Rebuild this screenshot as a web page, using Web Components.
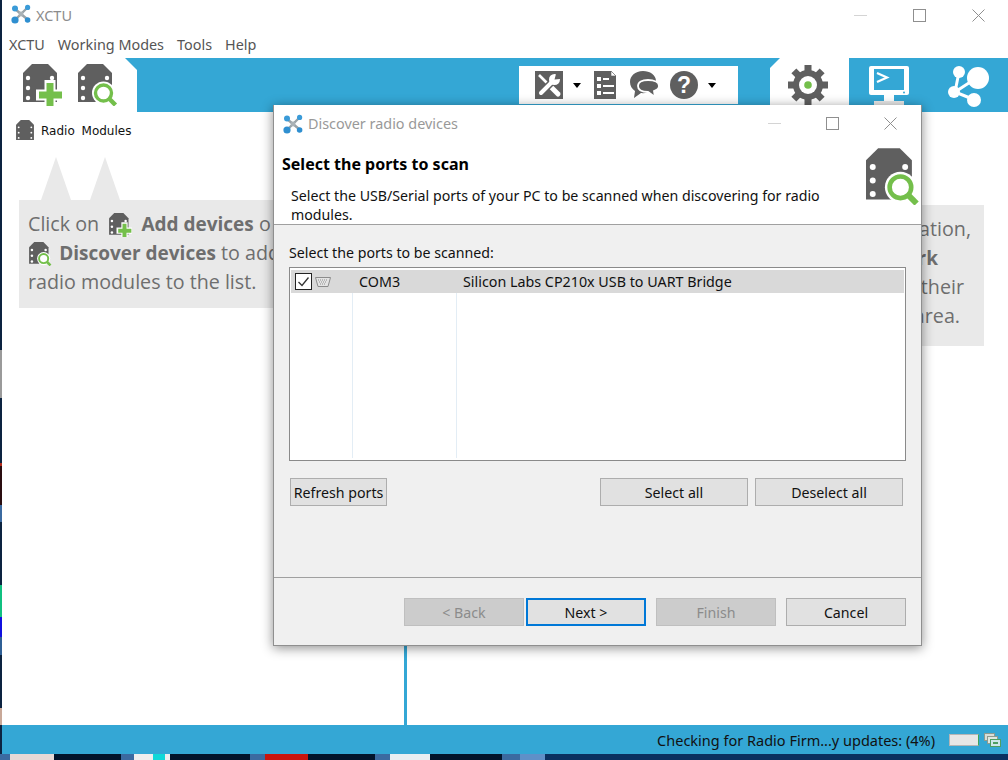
<!DOCTYPE html>
<html>
<head>
<meta charset="utf-8">
<title>XCTU</title>
<style>
  html, body { margin: 0; height: 760px; overflow: hidden; background: #0c2340; }
</style>
</head>
<body>
<xctu-app></xctu-app>

<script>
const UI_FONT = '"Noto Sans", "Open Sans", sans-serif';

class XctuLogo extends HTMLElement {
    connectedCallback() {
        const size = this.getAttribute('size') || 20;
        this.attachShadow({ mode: 'open' }).innerHTML = `
            <style>:host { display: inline-flex; flex: none; }</style>
            <svg width="${size}" height="${size}" viewBox="0 0 20 20">
                <path d="M4 5 L16 15 M16 4 L4 16" stroke="#9aa3a8" stroke-width="2.4"/>
                <circle cx="10" cy="10" r="2.4" fill="#aab2b6"/>
                <circle cx="4" cy="4.6" r="3" fill="#3a9bd8"/>
                <circle cx="16.6" cy="3.4" r="2.6" fill="#3a9bd8"/>
                <circle cx="16.6" cy="16" r="2.8" fill="#2f8fd0"/>
                <circle cx="4" cy="16" r="3.6" fill="#2f8fd0"/>
            </svg>`;
    }
}
customElements.define('xctu-logo', XctuLogo);

class ModuleIcon extends HTMLElement {
    connectedCallback() {
        const kind = this.getAttribute('kind') || 'plain';
        const w = this.getAttribute('w') || 40;
        const h = this.getAttribute('h') || 42;
        let badge = '';
        if (kind === 'add') {
            badge = `
                <path d="M27 16 V42 M13 31 H40" stroke="#fff" stroke-width="11"/>
                <path d="M27 19 V42 M16 31 H39" stroke="#74bf4b" stroke-width="7"/>`;
        } else if (kind === 'search') {
            badge = `
                <circle cx="25.500" cy="29" r="11.500" fill="#fff"/>
                <circle cx="25.500" cy="29" r="8" fill="#fff" stroke="#74bf4b" stroke-width="3.400"/>
                <path d="M31.500 35 L37.500 41" stroke="#74bf4b" stroke-width="4.400"/>`;
        }
        const box = kind === 'plain' ? '0 0 34 38' : '0 0 40 42';
        const r = kind === 'plain' ? 1.8 : 2.2;
        const holes = [[5, 14], [5, 24], [5, 34], [29, 14], [29, 24], [29, 34]]
            .map(([x, y]) => `<circle cx="${x}" cy="${y}" r="${r}"/>`).join('');
        this.attachShadow({ mode: 'open' }).innerHTML = `
            <style>:host { display: inline-flex; flex: none; vertical-align: middle; }</style>
            <svg width="${w}" height="${h}" viewBox="${box}">
                <path d="M9 0 H25 L34 9 V38 H0 V9 Z" fill="#5f5f5f"/>
                <g fill="#fff">${holes}</g>
                ${badge}
            </svg>`;
    }
}
customElements.define('module-icon', ModuleIcon);

class WinControls extends HTMLElement {
    connectedCallback() {
        this.attachShadow({ mode: 'open' }).innerHTML = `
            <style>
                :host { display: flex; align-items: center; gap: var(--ctl-gap, 46px); }
                svg { display: block; }
            </style>
            <svg width="13" height="13" viewBox="0 0 13 13"><path d="M0 6.5 H13" stroke="#d4d4d4"/></svg>
            <svg width="13" height="13" viewBox="0 0 13 13"><rect x=".5" y=".5" width="12" height="12" fill="none" stroke="#8f8f8f"/></svg>
            <svg width="13" height="13" viewBox="0 0 13 13"><path d="M.5 .5 L12.5 12.5 M12.5 .5 L.5 12.5" stroke="#8f8f8f"/></svg>`;
    }
}
customElements.define('win-controls', WinControls);

class TitleBar extends HTMLElement {
    connectedCallback() {
        this.attachShadow({ mode: 'open' }).innerHTML = `
            <style>
                :host {
                    display: flex; align-items: center; height: 30px; background: #fff;
                    padding: 0 23px 0 9px; font: 14.500px ${UI_FONT}; color: #8c8c8c;
                }
                xctu-logo { margin-top: -2px; }
                span { margin: -1px 0 0 5px; flex: 1; }
            </style>
            <xctu-logo></xctu-logo>
            <span>XCTU</span>
            <win-controls></win-controls>`;
    }
}
customElements.define('title-bar', TitleBar);

class MenuBar extends HTMLElement {
    connectedCallback() {
        this.attachShadow({ mode: 'open' }).innerHTML = `
            <style>
                :host {
                    display: flex; align-items: center; gap: 13px; height: 28px; background: #fff;
                    padding: 0 7px; font: 14.400px ${UI_FONT}; color: #555;
                }
            </style>
            <span>XCTU</span><span>Working Modes</span><span>Tools</span><span>Help</span>`;
    }
}
customElements.define('menu-bar', MenuBar);

class ToolBar extends HTMLElement {
    connectedCallback() {
        this.attachShadow({ mode: 'open' }).innerHTML = `
            <style>
                :host {
                    display: flex; height: 54px; background: #34a7d5;
                }
                .devices {
                    width: 135px; background: #fff; display: flex; gap: 15px; padding: 6px 0 0 21px; box-sizing: border-box;
                    clip-path: polygon(0 0, 123px 0, 135px 12px, 135px 100%, 0 100%);
                }
                .tools {
                    margin: 8px 0 0 382px; width: 219px; height: 38px; background: #fff;
                    display: flex; align-items: center; box-sizing: border-box; padding-left: 16px;
                }
                .tools svg { display: block; flex: none; }
                .caret { width: 0; height: 0; border: 4.5px solid transparent; border-top: 5px solid #000; border-bottom: 0; }
                .modes { margin-left: 32px; display: flex; }
                .gear {
                    width: 79px; background: #fff; display: flex; justify-content: center; padding: 6px 3px 0 0; box-sizing: border-box;
                    clip-path: polygon(10px 0, 100% 0, 100% 100%, 0 100%, 0 10px);
                }
                .mode { width: 79px; display: flex; justify-content: center; padding-top: 7px; box-sizing: border-box; }
            </style>
            <div class="devices">
                <module-icon kind="add"></module-icon>
                <module-icon kind="search"></module-icon>
            </div>
            <div class="tools">
                <svg width="28" height="28" viewBox="0 0 28 28">
                    <rect width="28" height="28" fill="#5f5f5f"/>
                    <path d="M4 4 L14 14" stroke="#fff" stroke-width="2.600"/>
                    <path d="M15 15 L23 23" stroke="#fff" stroke-width="5" stroke-linecap="round"/>
                    <path d="M6 22 L17 11" stroke="#5f5f5f" stroke-width="7"/>
                    <path d="M6 22 L17 11" stroke="#fff" stroke-width="4" stroke-linecap="round"/>
                    <circle cx="19.500" cy="8.500" r="5.500" fill="#fff"/>
                    <path d="M19.500 8.500 L21 3 L26 3 L25 8 Z" fill="#5f5f5f"/>
                </svg>
                <span class="caret" style="margin-left:10px"></span>
                <svg style="margin-left:13px" width="22" height="28" viewBox="0 0 22 28">
                    <path d="M0 0 H17 L22 5 V28 H0 Z" fill="#5f5f5f"/>
                    <path d="M17 0 V5 H22 Z" fill="#fff" stroke="#5f5f5f" stroke-width=".6"/>
                    <g fill="#fff">
                        <rect x="3" y="6" width="4" height="4"/><rect x="9" y="7" width="6" height="2"/>
                        <rect x="3" y="13" width="4" height="4"/><rect x="9" y="14" width="11" height="2"/>
                        <rect x="3" y="20" width="4" height="4"/><rect x="9" y="21" width="11" height="2"/>
                    </g>
                </svg>
                <svg style="margin-left:14px" width="30" height="28" viewBox="0 0 30 28">
                    <path d="M13 0 C5 0 0 5 0 11 C0 15 2 18 5 20 L4 27 L11 22 C18 23 26 18 26 10 C26 4 20 0 13 0 Z" fill="#5f5f5f"/>
                    <path d="M18 9 C12 9 8 11 8 15 C8 19 12 21 18 21 L25 26 L24 20 C27 19 29 17 29 15 C29 11 24 9 18 9 Z" fill="#5f5f5f" stroke="#fff" stroke-width="1.800"/>
                </svg>
                <svg style="margin-left:10px" width="28" height="28" viewBox="0 0 28 28">
                    <circle cx="14" cy="14" r="14" fill="#5f5f5f"/>
                    <text x="14" y="22" text-anchor="middle" font-family="Liberation Sans" font-weight="700" font-size="23" fill="#fff">?</text>
                </svg>
                <span class="caret" style="margin-left:10px"></span>
            </div>
            <div class="modes">
                <div class="gear">
                    <svg width="42" height="42" viewBox="0 0 42 42">
                        <g fill="#5f5f5f">
                            <rect x="17.500" y="1" width="7" height="40"/>
                            <rect x="17.500" y="1" width="7" height="40" transform="rotate(45 21 21)"/>
                            <rect x="17.500" y="1" width="7" height="40" transform="rotate(90 21 21)"/>
                            <rect x="17.500" y="1" width="7" height="40" transform="rotate(135 21 21)"/>
                            <circle cx="21" cy="21" r="15"/>
                        </g>
                        <circle cx="21" cy="21" r="9" fill="#fff"/>
                        <circle cx="21" cy="21" r="3.800" fill="#74bf4b"/>
                    </svg>
                </div>
                <div class="mode">
                    <svg width="40" height="40" viewBox="0 0 40 40">
                        <rect x="0" y="1" width="40" height="29" rx="2" fill="#fff"/>
                        <rect x="5" y="4" width="30" height="21" fill="#34a7d5"/>
                        <path d="M8 8 L18 12.500 L8 17" fill="none" stroke="#fff" stroke-width="2.200"/>
                        <circle cx="35" cy="27.500" r="1" fill="#34a7d5"/>
                        <rect x="15" y="30" width="10" height="7" fill="#fff"/>
                        <rect x="5" y="36" width="30" height="4" fill="#e9e9e9"/>
                    </svg>
                </div>
                <div class="mode">
                    <svg width="42" height="42" viewBox="0 0 42 42">
                        <g stroke="#fff" stroke-width="3" fill="none">
                            <path d="M12 7 L8 27 L28 35 M8 27 L31 12"/>
                        </g>
                        <g fill="#fff">
                            <circle cx="31" cy="13" r="11"/>
                            <circle cx="12" cy="7" r="6"/>
                            <circle cx="7" cy="27" r="6"/>
                            <circle cx="27" cy="35" r="7"/>
                        </g>
                    </svg>
                </div>
            </div>`;
    }
}
customElements.define('tool-bar', ToolBar);

class HintBox extends HTMLElement {
    connectedCallback() {
        const peaks = (this.getAttribute('peaks') || '').split(',').map(Number);
        const tips = peaks.map(x => `<i style="left:${x}px"></i>`).join('');
        this.attachShadow({ mode: 'open' }).innerHTML = `
            <style>
                :host {
                    display: block; position: relative; background: #e9e9e9; box-sizing: border-box;
                    font: 19.700px/29px "Open Sans", "DejaVu Sans", sans-serif; color: #6e6e6e;
                }
                i {
                    position: absolute; top: -43px; margin-left: -15px; width: 30px; height: 43px;
                    background: #e9e9e9; clip-path: polygon(50% 0, 100% 100%, 0 100%);
                }
            </style>
            ${tips}<slot></slot>`;
    }
}
customElements.define('hint-box', HintBox);

class PushButton extends HTMLElement {
    connectedCallback() {
        this.attachShadow({ mode: 'open' }).innerHTML = `
            <style>
                :host {
                    display: flex; align-items: center; justify-content: center; height: 28px; box-sizing: border-box;
                    border: 1px solid #adadad; background: #e1e1e1; color: #111; font: 14.200px ${UI_FONT};
                }
                :host([disabled]) { background: #cccccc; border-color: #bfbfbf; color: #8b8b8b; }
                :host([focused]) { border: 2px solid #0078d7; }
            </style>
            <slot></slot>`;
    }
}
customElements.define('push-button', PushButton);

class PortTable extends HTMLElement {
    connectedCallback() {
        this.attachShadow({ mode: 'open' }).innerHTML = `
            <style>
                :host {
                    display: grid; grid-template-columns: 62px 104px 1fr; grid-template-rows: 23px 1fr;
                    height: 194px; box-sizing: border-box; border: 1px solid #8a8a8a; background: #fff;
                    padding: 2px 1px; font: 14.300px ${UI_FONT}; color: #111;
                }
                .cell { background: #d9d9d9; display: flex; align-items: center; }
                .check { padding-left: 4px; gap: 3px; }
                .name { padding-left: 6px; }
                .desc { padding-left: 6px; }
                .box { width: 15px; height: 15px; border: 1px solid #222; background: #fff; display: flex; }
                .col { border-right: 1px solid #e3edf5; }
            </style>
            <div class="cell check">
                <span class="box">
                    <svg width="15" height="15" viewBox="0 0 15 15"><path d="M2.500 8 L6 11.500 L12.500 3.500" fill="none" stroke="#333" stroke-width="1.300"/></svg>
                </span>
                <svg width="16" height="10" viewBox="0 0 16 10">
                    <path d="M.5 .5 H15.500 L13 9.500 H3 Z" fill="#e4e4e4" stroke="#8c8c8c"/>
                    <path d="M3 3 H13 M4 5 H12 M5 7 H11" stroke="#8c8c8c" stroke-dasharray="1 1"/>
                </svg>
            </div>
            <div class="cell name">COM3</div>
            <div class="cell desc">Silicon Labs CP210x USB to UART Bridge</div>
            <div class="col"></div>
            <div class="col"></div>
            <div></div>`;
    }
}
customElements.define('port-table', PortTable);

class DiscoverDialog extends HTMLElement {
    connectedCallback() {
        this.attachShadow({ mode: 'open' }).innerHTML = `
            <style>
                :host {
                    position: absolute; left: 273px; top: 105px; width: 649px; height: 541px;
                    box-sizing: border-box; border: 1px solid #8f8f8f; border-width: 0 1px 1px;
                    box-shadow: 0 2px 11px rgba(0,0,0,.45); background: #f0f0f0;
                    display: flex; flex-direction: column; font: 14.200px ${UI_FONT}; color: #111;
                }
                .head { background: #fff; height: 120px; box-sizing: border-box; border-bottom: 1px solid #a0a0a0; flex: none; }
                .title { display: flex; align-items: center; height: 38px; padding: 0 24px 0 9px; color: #999; font-size: 14.400px; }
                .title span { margin: -2px 0 0 5px; flex: 1; }
                .title win-controls { margin-top: -1px; --ctl-gap: 45px; }
                .intro { position: relative; padding-left: 8px; }
                .intro h1 { margin: 10px 0 0; font-size: 16px; line-height: 22px; font-weight: 700; color: #000; }
                .intro p { margin: 11px 70px 0 9px; line-height: 19px; }
                .intro module-icon { position: absolute; right: 1px; top: -5px; }
                .body { flex: 1; padding: 19px 15px 0; }
                .label { line-height: 18px; margin-bottom: 5px; }
                .actions { display: flex; margin: 17px 3px 0 1px; gap: 7px; }
                .actions .refresh { width: 97px; margin-right: auto; }
                .actions .wide { width: 148px; }
                .foot { flex: none; height: 68px; box-sizing: border-box; border-top: 1px solid #a0a0a0; display: flex; justify-content: flex-end; padding: 20px 15px 0 0; }
                .foot push-button { width: 120px; margin-left: 10px; }
                .foot push-button:nth-child(2) { margin-left: 2px; }
            </style>
            <div class="head">
                <div class="title">
                    <xctu-logo></xctu-logo>
                    <span>Discover radio devices</span>
                    <win-controls></win-controls>
                </div>
                <div class="intro">
                    <h1>Select the ports to scan</h1>
                    <p>Select the USB/Serial ports of your PC to be scanned when discovering for radio modules.</p>
                    <module-icon kind="search" w="54" h="57"></module-icon>
                </div>
            </div>
            <div class="body">
                <div class="label">Select the ports to be scanned:</div>
                <port-table></port-table>
                <div class="actions">
                    <push-button class="refresh">Refresh ports</push-button>
                    <push-button class="wide">Select all</push-button>
                    <push-button class="wide">Deselect all</push-button>
                </div>
            </div>
            <div class="foot">
                <push-button disabled>&lt; Back</push-button>
                <push-button focused>Next &gt;</push-button>
                <push-button disabled>Finish</push-button>
                <push-button>Cancel</push-button>
            </div>`;
    }
}
customElements.define('discover-dialog', DiscoverDialog);

class StatusBar extends HTMLElement {
    connectedCallback() {
        this.attachShadow({ mode: 'open' }).innerHTML = `
            <style>
                :host {
                    display: flex; align-items: center; justify-content: flex-end; height: 29px; background: #34a7d5;
                    padding-right: 7px; font: 14.500px ${UI_FONT}; color: #111;
                }
                .bar { width: 30px; height: 12px; margin: 0 0 0 14px; background: #e6e6e6; border: 1px solid #b5b5b5; border-right: 1px solid #3fa45c; box-sizing: border-box; }
                svg { margin-left: 5px; display: block; }
            </style>
            <span>Checking for Radio Firm...y updates: (4%)</span>
            <div class="bar"></div>
            <svg width="17" height="14" viewBox="0 0 17 14">
                <rect x=".5" y=".5" width="10" height="7" fill="#d8ded8" stroke="#8d9a8f"/>
                <rect x="3.500" y="3.500" width="10" height="7" fill="#dfe8e0" stroke="#8d9a8f"/>
                <rect x="6.500" y="6.500" width="10" height="7" fill="#cfe6ea" stroke="#4f9e62"/>
                <rect x="9" y="9" width="5" height="2" fill="#4f9e62"/>
            </svg>`;
    }
}
customElements.define('status-bar', StatusBar);

class XctuApp extends HTMLElement {
    connectedCallback() {
        this.attachShadow({ mode: 'open' }).innerHTML = `
            <style>
                :host { display: flex; flex-direction: column; height: 760px; position: relative; }
                .window {
                    display: flex; flex-direction: column; height: 754px; margin-left: 2px; background: #fff;
                }
                .panes { flex: 1; display: grid; grid-template-columns: 402px 3px 1fr; min-height: 0; }
                .left { padding: 8px 0 0 14px; overflow: hidden; }
                .list-title { display: flex; align-items: center; gap: 7px; height: 20px; font: 12px "DejaVu Sans", sans-serif; color: #111; word-spacing: 3px; }
                .list-title span { position: relative; top: 1px; }
                .left hint-box { margin: 60px 0 0 3px; height: 108px; width: 380px; padding: 9px 0 0 9px; white-space: nowrap; }
                b { font-weight: 700; font-size: 19px; line-height: 1; }
                .left hint-box module-icon { position: relative; top: -1px; margin-block: -4px; }
                .sash { background: #34a7d5; }
                .right { padding: 93px 24px 0 0; }
                .right hint-box { margin-left: 100px; height: 141px; padding-top: 8.500px; display: flex; flex-direction: column; align-items: flex-end; white-space: nowrap; }
                .right span { display: block; }
                .task { flex: 1; display: flex; }
                .task div { height: 100%; }
                .strip {
                    position: absolute; left: 0; top: 0; height: 754px; width: 2px;
                    background: linear-gradient(#0c2340 0 350px, #9a9a9a 350px 398px, #0c2340 398px 463px, #b02a1a 463px 466px, #2a0d10 466px 505px, #3b6aa0 505px 522px, #0c2340 522px 585px, #10c080 585px 617px, #1010e0 617px 637px, #2f5f95 637px 655px, #0c2340 655px 708px, #c8a898 708px 725px, #0c2340 725px);
                }
            </style>
            <div class="window">
                <title-bar></title-bar>
                <menu-bar></menu-bar>
                <tool-bar></tool-bar>
                <div class="panes">
                    <div class="left">
                        <div class="list-title"><module-icon w="18" h="20"></module-icon><span>Radio Modules</span></div>
                        <hint-box peaks="37,86">Click on <module-icon style="margin-inline:5px 4px" kind="add" w="23" h="24"></module-icon> <b>Add devices</b> o<br><module-icon style="margin-inline:1px 2px" kind="search" w="23" h="24"></module-icon> <b>Discover devices</b> to add<br>radio modules to the list.</hint-box>
                    </div>
                    <div class="sash"></div>
                    <div class="right">
                        <hint-box peaks="255">
                            <span style="margin-right:13px">ation,</span>
                            <span style="margin-right:46px"><b>rk</b></span>
                            <span style="margin-right:20px">their</span>
                            <span style="margin-right:24px">area.</span>
                        </hint-box>
                    </div>
                </div>
                <status-bar></status-bar>
            </div>
            <div class="task">
                <div style="width:10px;background:#3b6aa0"></div>
                <div style="width:44px;background:#e6d9d6"></div>
                <div style="width:67px;background:#02142b"></div>
                <div style="width:13px;background:#3b6aa0"></div>
                <div style="width:19px;background:#eee"></div>
                <div style="width:12px;background:#10d8d8"></div>
                <div style="width:5px;background:#eee"></div>
                <div style="width:80px;background:#02142b"></div>
                <div style="width:15px;background:#3b6aa0"></div>
                <div style="width:43px;background:#c8140c"></div>
                <div style="width:67px;background:#02142b"></div>
                <div style="width:15px;background:#3b6aa0"></div>
                <div style="width:40px;background:#e8eef2"></div>
                <div style="width:72px;background:#02142b"></div>
                <div style="width:18px;background:#3b6aa0"></div>
                <div style="width:25px;background:#5f90c8"></div>
                <div style="flex:1;background:#0a3060"></div>
            </div>
            <div class="strip"></div>
            <discover-dialog></discover-dialog>`;
    }
}
customElements.define('xctu-app', XctuApp);
</script>
</body>
</html>
